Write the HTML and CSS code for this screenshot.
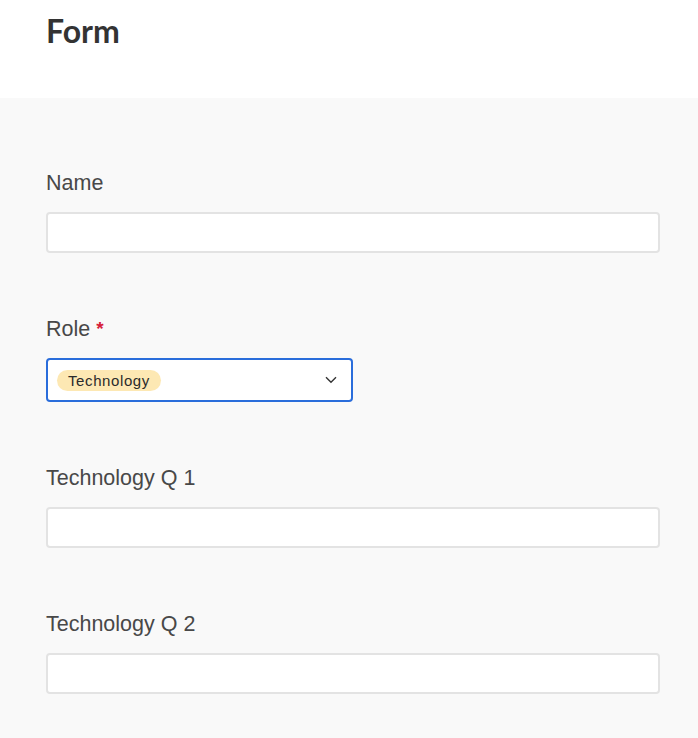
FILE: index.html
```html
<!DOCTYPE html>
<html>
<head>
<meta charset="utf-8">
<link rel="stylesheet" href="styles.css">
</head>
<body>
<header class="header">
  <h1 class="title">Form</h1>
</header>
<main class="content">
  <div class="field">
    <label class="label">Name</label>
    <div class="input"></div>
  </div>
  <div class="field">
    <label class="label">Role <span class="req">*</span></label>
    <div class="select">
      <span class="tag">Technology</span>
      <svg class="chev" width="12" height="8" viewBox="0 0 12 8"><path d="M1 1.2 L6 6.2 L11 1.2" fill="none" stroke="#333" stroke-width="1.4"/></svg>
    </div>
  </div>
  <div class="field">
    <label class="label">Technology Q 1</label>
    <div class="input"></div>
  </div>
  <div class="field">
    <label class="label">Technology Q 2</label>
    <div class="input"></div>
  </div>
</main>
</body>
</html>
```
FILE: styles.css
```css
html, body { margin: 0; padding: 0; }
body {
  background: #f9f9f9;
  font-family: "Liberation Sans", Arial, sans-serif;
  color: #454545;
}
.header {
  background: #ffffff;
  height: 98px;
  padding: 0 46px;
  box-sizing: border-box;
}
.title {
  margin: 0;
  padding-top: 11px;
  font-family: Lato, "Noto Sans", sans-serif;
  font-weight: 700;
  font-size: 32px;
  line-height: 40px;
  color: #333333;
}
.content {
  padding: 73px 38px 0 46px;
  display: flex;
  flex-direction: column;
  gap: 64px;
}
.field {
  display: flex;
  flex-direction: column;
}
.label {
  font-size: 21.5px;
  line-height: 24px;
  margin-bottom: 17px;
  color: #484848;
}
.req { color: #d6203a; font-size: 19px; font-weight: 700; vertical-align: top; }
.input {
  height: 41px;
  box-sizing: border-box;
  border: 2px solid #e3e3e3;
  border-radius: 4px;
  background: #fff;
}
.select {
  width: 307px;
  height: 44px;
  box-sizing: border-box;
  border: 2px solid #2a6ddb;
  border-radius: 4px;
  background: #fff;
  display: flex;
  align-items: center;
  justify-content: space-between;
  padding: 0 14px 0 9px;
}
.tag {
  background: #fde8b3;
  border-radius: 11px;
  height: 21px;
  line-height: 21px;
  padding: 0 11px;
  font-size: 15px;
  letter-spacing: 0.6px;
  color: #2b2b2b;
}
.chev { display: block; }
```
